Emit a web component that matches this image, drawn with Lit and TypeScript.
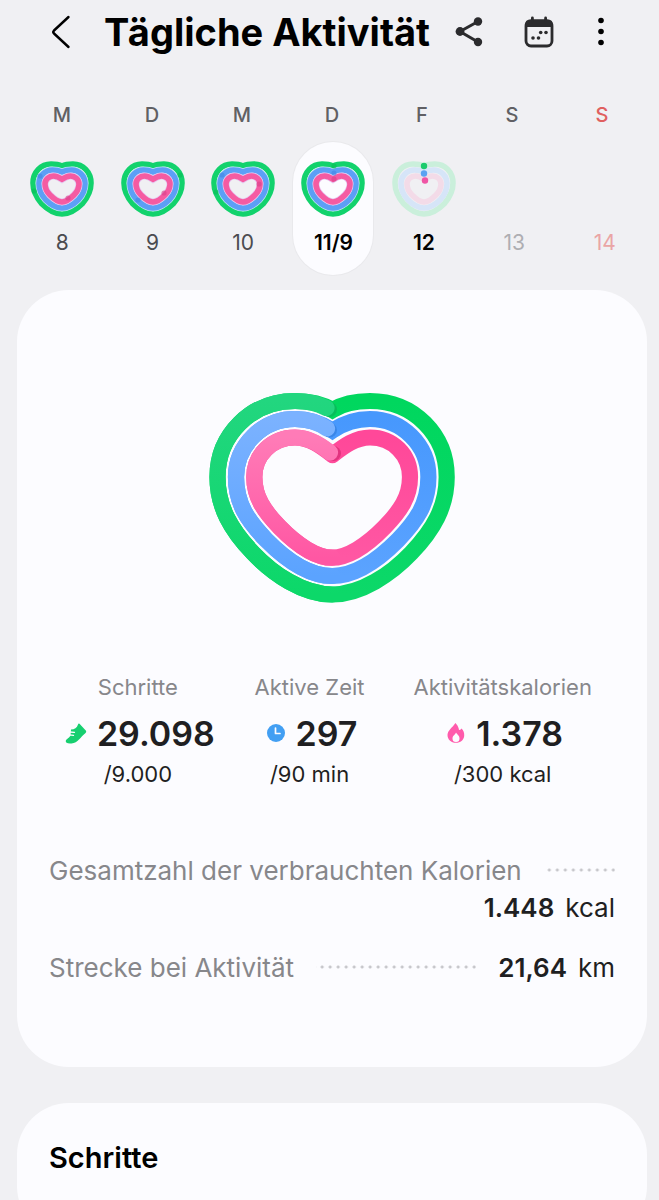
import { LitElement, html, svg, css, nothing } from "lit";
import { customElement, property } from "lit/decorators.js";

type Dot = [number, number];

interface Day {
  label: string;
  state: "past" | "selected" | "today" | "future" | "future-sunday";
  caps?: Dot[];
}

const WEEKDAYS = ["M", "D", "M", "D", "F", "S", "S"];

const DAYS: Day[] = [
  { label: "8", state: "past", caps: [[4, 30], [10, 15], [38, 37]] },
  { label: "9", state: "past", caps: [[59, 14], [17, 39], [43, 32]] },
  { label: "10", state: "past", caps: [[5, 31], [11, 14], [48, 23]] },
  { label: "11/9", state: "selected", caps: [[33, 5], [33, 12], [33, 18]] },
  { label: "12", state: "today" },
  { label: "13", state: "future" },
  { label: "14", state: "future-sunday" },
];

const SMALL_RINGS = [
  "M32 5 C28 3 24 3 21 3 C11 3 3 11 3 22 C3 30 6.500 36.500 11.500 42.500 C17 48 25 53 32 53 C39 53 47 48 52.500 42.500 C57.500 36.500 61 30 61 22 C61 11 53 3 43 3 C40 3 36 3 32 5 Z",
  "M32 11 C29 9.500 26 9 22.500 9 C15 9 9 15 9 22.500 C9 29 11.500 34 15.500 38.500 C20.500 43.500 26 47 32 47 C38 47 43.500 43.500 48.500 38.500 C52.500 34 55 29 55 22.500 C55 15 49 9 41.500 9 C38 9 35 9.500 32 11 Z",
  "M32 18.300 C29.500 16.500 27 15 23.500 15 C19 15 15 18.500 15 23 C15 28 17 31 20 34 C24.500 38.500 28 41 32 41 C36 41 39.500 38.500 44 34 C47 31 49 28 49 23 C49 18.500 45 15 40.500 15 C37 15 34.500 16.500 32 18.300 Z",
];

@customElement("day-heart")
export class DayHeart extends LitElement {
  @property({ type: Boolean }) faint = false;
  @property({ attribute: false }) caps: Dot[] = [];

  static styles = css`
    :host { display: block; width: 64px; height: 56px; }
    svg { display: block; width: 100%; height: 100%; }
    .ring { fill: none; stroke-width: 5.6; stroke-linejoin: round; }
    .gap { fill: none; stroke: #bde4f2; stroke-width: 7; }
    .gap.rosy { stroke: #e6c6f0; stroke-width: 7; }
  `;

  render() {
    const colors = this.faint
      ? ["#caefdb", "#d6e5f8", "#f3dbe8"]
      : ["#12d26c", "#5c9ff6", "#f55ba2"];
    const dark = ["#08bd57", "#3f85e4", "#d94089"];
    const dots = ["#1acb6c", "#5aa2f2", "#ef55a5"];
    return html`<svg viewBox="0 0 64 56" aria-hidden="true">
      <path class="ring" d=${SMALL_RINGS[0]} stroke=${colors[0]} />
      ${this.faint ? nothing : svg`<path class="gap" d=${SMALL_RINGS[1]} />`}
      <path class="ring" d=${SMALL_RINGS[1]} stroke=${colors[1]} />
      ${this.faint ? nothing : svg`<path class="gap rosy" d=${SMALL_RINGS[2]} />`}
      <path class="ring" d=${SMALL_RINGS[2]} stroke=${colors[2]} />
      ${this.caps.map(([x, y], i) => svg`<circle cx=${x} cy=${y} r="2.6" fill=${dark[i]} opacity="0.6" />`)}
      ${this.faint
        ? svg`<circle cx="32" cy="5" r="3.2" fill=${dots[0]} />
            <circle cx="32" cy="12.500" r="3.2" fill=${dots[1]} />
            <circle cx="33" cy="19.500" r="3.2" fill=${dots[2]} />`
        : nothing}
    </svg>`;
  }
}

@customElement("goal-heart")
export class GoalHeart extends LitElement {
  static styles = css`
    :host { display: block; width: 275px; height: 235px; }
    svg { display: block; width: 100%; height: 100%; }
    path { fill: none; stroke-width: 16.2; }
    .cap { stroke-linecap: round; }
    .round { stroke-linejoin: round; }
  `;

  render() {
    return html`<svg viewBox="0 0 275 235" role="img" aria-label="Tagesziele erreicht">
      <defs>
        <linearGradient id="gl" gradientUnits="userSpaceOnUse" x1="0" y1="20" x2="0" y2="215"><stop offset="0" stop-color="#22d67f" /><stop offset="1" stop-color="#0cd869" /></linearGradient>
        <linearGradient id="gr" gradientUnits="userSpaceOnUse" x1="0" y1="20" x2="0" y2="215"><stop offset="0" stop-color="#00d75e" /><stop offset="1" stop-color="#0cd869" /></linearGradient>
        <linearGradient id="bl" gradientUnits="userSpaceOnUse" x1="0" y1="38" x2="0" y2="196"><stop offset="0" stop-color="#7bb2ff" /><stop offset="1" stop-color="#5ba3ff" /></linearGradient>
        <linearGradient id="br" gradientUnits="userSpaceOnUse" x1="0" y1="38" x2="0" y2="196"><stop offset="0" stop-color="#4798fd" /><stop offset="1" stop-color="#5ba3ff" /></linearGradient>
        <linearGradient id="pl" gradientUnits="userSpaceOnUse" x1="0" y1="57" x2="0" y2="178"><stop offset="0" stop-color="#ff7bb7" /><stop offset="1" stop-color="#ff57a3" /></linearGradient>
        <linearGradient id="pr" gradientUnits="userSpaceOnUse" x1="0" y1="57" x2="0" y2="178"><stop offset="0" stop-color="#ff4899" /><stop offset="1" stop-color="#ff57a3" /></linearGradient>
      </defs>

      <path stroke="url(#gr)" d="M137.500 30 C126 23 112 21 100 21 C56 21 22.500 55 22.500 97 C22.500 127 36 150 58 173 C78 194 108 214.500 137.100 214.500 C166.200 214.500 196.200 194 216.200 173 C238.200 150 251.700 127 251.700 97 C251.700 55 219 21 175 21 C163 21 149 23 137.500 30 Z" />
      <circle cx="134.500" cy="29.500" r="7.500" fill="#08bd5b" />
      <path class="cap" stroke="url(#gl)" d="M131.500 28 C121 22.500 111 21 100 21 C56 21 22.500 55 22.500 97 C22.500 127 36 150 58 173 C78 194 108 214.500 137.100 214.500" />

      <path stroke="url(#br)" d="M137.500 50.500 C126 43 113 39 100 39 C68 39 41 65 41 97 C41 124 53 141 71.300 160 C90 179 114 196 137.100 196 C160.200 196 184.200 179 203 160 C221.200 141 233.400 124 233.400 97 C233.400 65 207 39 175 39 C162 39 149 43 137.500 50.500 Z" />
      <circle cx="134.500" cy="50" r="7.500" fill="#3a86e8" />
      <path class="cap" stroke="url(#bl)" d="M132 48.500 C123 42.500 112 39 100 39 C68 39 41 65 41 97 C41 124 53 141 71.300 160 C90 179 114 196 137.100 196" />

      <path class="round" stroke="url(#pr)" d="M137.500 75 C127 67 115 57.500 100 57.500 C77 57.500 59.300 75 59.300 97 C59.300 117 69 131 84.500 147 C103 166 122 177.700 137.100 177.700 C152.200 177.700 171.200 166 189.700 147 C205.200 131 215 117 215 97 C215 75 198 57.500 175 57.500 C160 57.500 148 67 137.500 75 Z" />
      <circle cx="138.500" cy="73.500" r="7.500" fill="#e2337f" />
      <path class="cap" stroke="url(#pl)" d="M135 72.500 C126 65 114 57.500 100 57.500 C77 57.500 59.300 75 59.300 97 C59.300 117 69 131 84.500 147 C103 166 122 177.700 137.100 177.700" />
    </svg>`;
  }
}

@customElement("app-root")
export class AppRoot extends LitElement {
  static styles = css`
    :host {
      display: block;
      box-sizing: border-box;
      min-height: 100vh;
      padding: 0 12px 0 17px;
      overflow: hidden;
      background: #f0f0f3;
      color: #1f1f22;
      font-family: Inter, "Liberation Sans", sans-serif;
    }
    h1, h2, p, dl, dd, dt { margin: 0; }
    button { border: 0; padding: 0; background: none; color: inherit; font: inherit; }
    svg { display: block; }

    .bar { display: flex; align-items: center; height: 64px; padding: 0 34px 0 25px; }
    .tool { display: grid; place-items: center; width: 40px; height: 48px; }
    .tool.menu { width: 24px; }
    .title { flex: 1; margin-left: 22px; white-space: nowrap; font-size: 38px; line-height: 48px; font-weight: 700; color: #000; }
    .tools { display: flex; gap: 30px; }

    .weekdays { display: grid; grid-template-columns: repeat(7, 1fr); margin-top: 36px; font-size: 20px; line-height: 30px; font-weight: 500; text-align: center; color: #606064; }
    .sunday { color: #e0605f; }

    .days { display: grid; grid-template-columns: repeat(7, 1fr); margin: 12px -3px 0 0; justify-items: center; }
    .day { box-sizing: border-box; display: flex; flex-direction: column; align-items: center; justify-content: flex-end; width: 80px; height: 133px; padding-bottom: 18px; gap: 12px; border-radius: 40px; font-size: 21px; line-height: 28px; color: #4b4b4f; }
    .day.selected { background: #fcfcff; box-shadow: 0 0 0 1px #e9e9ec; color: #000; font-weight: 600; }
    .day.today { color: #000; font-weight: 600; }
    .day.future { color: #aeaeb2; }
    .day.future-sunday { color: #eaa5a5; }

    .card { border-radius: 52px; background: #fcfcff; }
    .summary { margin-top: 15px; padding: 90px 32px 81px; }
    .heart { margin: 0 auto; }

    .stats { display: grid; grid-template-columns: 4fr 4fr 5fr; margin: 57px 5px 0 3px; text-align: center; }
    .stat { display: flex; flex-direction: column; align-items: center; white-space: nowrap; }
    .name { font-size: 22px; line-height: 30px; color: #87878b; }
    .value { display: flex; align-items: center; gap: 10px; margin-top: 10px; padding-left: 4px; font-size: 34px; line-height: 44px; font-weight: 600; color: #1f1f22; }
    .goal { margin-top: 3px; font-size: 22px; line-height: 30px; }

    .totals { display: grid; gap: 23px; margin-top: 63px; font-size: 26px; line-height: 37px; }
    .total { display: flex; flex-wrap: wrap; align-items: center; column-gap: 22px; }
    .total dt { color: #87878b; }
    .total dd { margin-left: auto; display: flex; gap: 11px; }
    .total b { font-weight: 600; }
    .leader { flex: 1 1 64px; height: 6px; background: radial-gradient(circle at 6px 2px, #c6c6ca 1px, transparent 2px) right center / 8px 6px repeat-x; }

    .steps { margin-top: 36px; padding: 35px 32px 60px; }
    .steps h2 { font-size: 29px; line-height: 40px; font-weight: 600; color: #000; }
  `;

  render() {
    return html`
      <header class="bar">
        <button class="tool" aria-label="Zurück">
          <svg width="40" height="40" viewBox="0 0 40 40" fill="none" stroke="#000" stroke-width="2.4" stroke-linecap="round" stroke-linejoin="round"><path d="M26.500 5 L12 18.500 Q10.500 20 12 21.500 L26.500 35" /></svg>
        </button>
        <h1 class="title">Tägliche Aktivität</h1>
        <div class="tools">
          <button class="tool" aria-label="Teilen">
            <svg width="30" height="32" viewBox="0 0 30 32" fill="#2b2b2d"><path d="M24 5.500 L6 15.500 L24 26" fill="none" stroke="#2b2b2d" stroke-width="3" /><circle cx="24" cy="5.500" r="4.200" /><circle cx="6" cy="15.500" r="4.400" /><circle cx="24" cy="26" r="4.200" /></svg>
          </button>
          <button class="tool" aria-label="Kalender">
            <svg width="32" height="34" viewBox="0 0 32 34" fill="#2b2b2d"><rect x="3" y="6" width="26" height="25" rx="5" fill="none" stroke="#2b2b2d" stroke-width="2.800" /><path d="M2 12 V10 Q2 4.600 8 4.600 H24 Q30 4.600 30 10 V12 Z" /><rect x="8" y="1.500" width="2.800" height="7" rx="1.400" /><rect x="21.200" y="1.500" width="2.800" height="7" rx="1.400" /><circle cx="17.700" cy="17.500" r="1.800" /><circle cx="23" cy="17.500" r="1.800" /><circle cx="10" cy="23" r="1.800" /><circle cx="15.500" cy="23" r="1.800" /></svg>
          </button>
          <button class="tool menu" aria-label="Weitere Optionen">
            <svg width="8" height="32" viewBox="0 0 8 32"><circle cx="4" cy="4.500" r="2.800" /><circle cx="4" cy="15.500" r="2.800" /><circle cx="4" cy="26.500" r="2.800" /></svg>
          </button>
        </div>
      </header>

      <div class="weekdays">
        ${WEEKDAYS.map((d, i) => html`<span class=${i === 6 ? "sunday" : ""}>${d}</span>`)}
      </div>
      <nav class="days" aria-label="Tage">
        ${DAYS.map(
          (d) => html`<button class="day ${d.state}">
            ${d.state.startsWith("future") ? nothing : html`<day-heart .caps=${d.caps ?? []} ?faint=${d.state === "today"}></day-heart>`}
            <span>${d.label}</span>
          </button>`
        )}
      </nav>

      <main>
        <section class="card summary">
          <goal-heart class="heart"></goal-heart>
          <div class="stats">
            <div class="stat">
              <p class="name">Schritte</p>
              <p class="value">
                <svg width="22" height="24" viewBox="0 0 22 24"><path d="M14.500 1.800 L21 8.800 Q21.800 10 20.300 11.300 C15.500 15 13 21 6.500 21.500 C2.500 21.800 .4 21 .8 18.800 C1.300 16.800 4.500 16 5.500 13.500 L6 7.600 C9.500 7.600 12 6 13 2.500 Q13.500 1.200 14.500 1.800 Z" fill="#17cf70" /><path d="M4.500 10 L9.500 10.300 M4 12.800 L8.500 13.400" fill="none" stroke="#fcfcff" stroke-width="1.300" stroke-linecap="round" /></svg>
                29.098
              </p>
              <p class="goal">/9.000</p>
            </div>
            <div class="stat">
              <p class="name">Aktive Zeit</p>
              <p class="value">
                <svg width="20" height="22" viewBox="0 0 20 22"><circle cx="10" cy="10" r="9" fill="#429ff3" /><path d="M9.500 5 V10.500 H14" fill="none" stroke="#fcfcff" stroke-width="1.700" stroke-linecap="round" stroke-linejoin="round" /></svg>
                297
              </p>
              <p class="goal">/90 min</p>
            </div>
            <div class="stat">
              <p class="name">Aktivitätskalorien</p>
              <p class="value">
                <svg width="20" height="24" viewBox="0 0 20 24"><path d="M9.500 1 C10.500 2.500 12.500 4 13 8 Q14.500 8 15.500 6.500 C17.500 8 18.500 11 18.200 14 C17.700 18 14.500 20.800 10 20.800 C5 20.800 1.500 17.500 1.500 13 C1.500 8.500 6.500 5.500 9.500 1 Z" fill="#ff5bac" /><path d="M10 10.500 C11 12.500 13.500 13.500 13.500 16.500 A3.500 3.500 0 0 1 6.500 16.500 C6.500 13.500 9.500 12.500 10 10.500 Z" fill="#fcfcff" /></svg>
                1.378
              </p>
              <p class="goal">/300 kcal</p>
            </div>
          </div>

          <dl class="totals">
            <div class="total">
              <dt>Gesamtzahl der verbrauchten Kalorien</dt>
              <span class="leader"></span>
              <dd><b>1.448</b><span>kcal</span></dd>
            </div>
            <div class="total">
              <dt>Strecke bei Aktivität</dt>
              <span class="leader"></span>
              <dd><b>21,64</b><span>km</span></dd>
            </div>
          </dl>
        </section>

        <section class="card steps"><h2>Schritte</h2></section>
      </main>
    `;
  }
}
